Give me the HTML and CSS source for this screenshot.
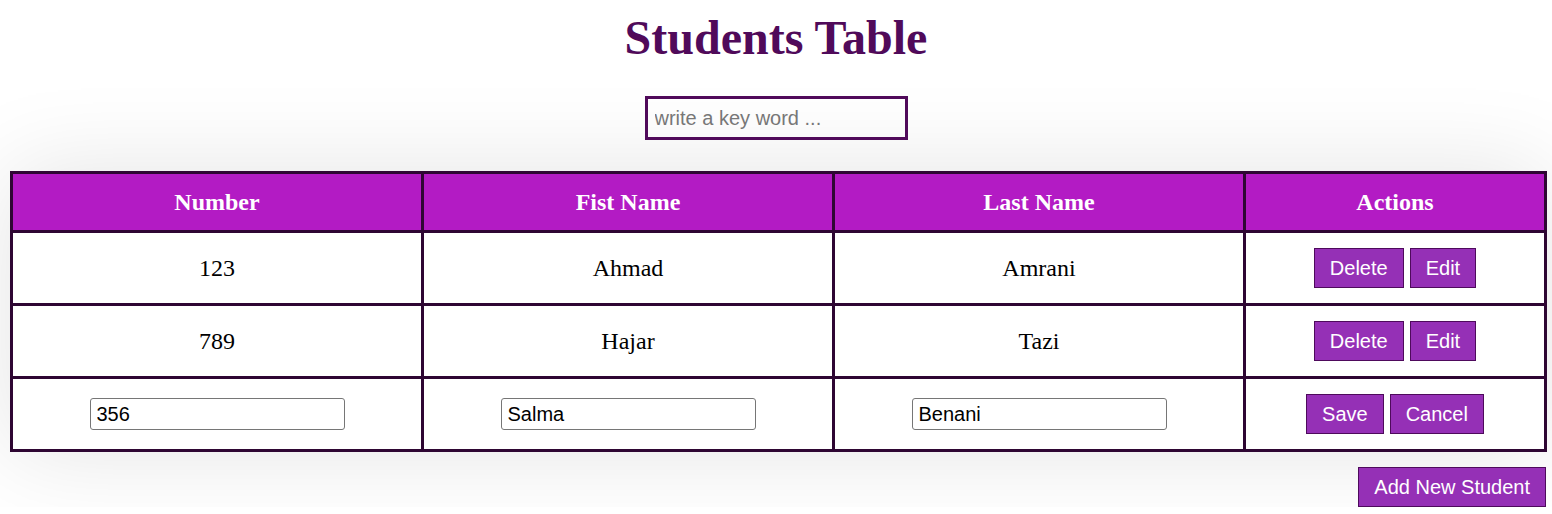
FILE: index.html
```html
<!DOCTYPE html>
<html lang="en">
<head>
<meta charset="utf-8">
<title>Students Table</title>
<link rel="stylesheet" href="styles.css">
</head>
<body>
  <h1 class="title">Students Table</h1>
  <div class="search-wrap">
    <input class="search" type="text" placeholder="write a key word ...">
  </div>
  <table class="students">
    <thead>
      <tr>
        <th class="col-wide">Number</th>
        <th class="col-wide">Fist Name</th>
        <th class="col-wide">Last Name</th>
        <th>Actions</th>
      </tr>
    </thead>
    <tbody>
      <tr>
        <td>123</td>
        <td>Ahmad</td>
        <td>Amrani</td>
        <td><div class="actions"><button class="btn">Delete</button><button class="btn">Edit</button></div></td>
      </tr>
      <tr>
        <td>789</td>
        <td>Hajar</td>
        <td>Tazi</td>
        <td><div class="actions"><button class="btn">Delete</button><button class="btn">Edit</button></div></td>
      </tr>
      <tr>
        <td><input class="cell-input" type="text" value="356"></td>
        <td><input class="cell-input" type="text" value="Salma"></td>
        <td><input class="cell-input" type="text" value="Benani"></td>
        <td><div class="actions"><button class="btn">Save</button><button class="btn">Cancel</button></div></td>
      </tr>
    </tbody>
  </table>
  <div class="footer">
    <button class="btn">Add New Student</button>
  </div>
</body>
</html>
```

FILE: styles.css
```css
html, body {
  margin: 0;
  padding: 0;
  background: #ffffff;
}

body {
  font-family: "Liberation Serif", "Times New Roman", serif;
  overflow: hidden;
}

.title {
  margin: 11px 0 0;
  text-align: center;
  font-size: 48px;
  font-weight: bold;
  color: #500a5a;
  line-height: 53px;
}

.search-wrap {
  display: flex;
  justify-content: center;
  margin-top: 32px;
}

.search {
  box-sizing: border-box;
  width: 263px;
  height: 44px;
  border: 3px solid #500a5a;
  padding: 0 7px;
  font-family: "Liberation Sans", Arial, sans-serif;
  font-size: 20px;
  color: #222;
  outline: none;
  background: transparent;
}

.search::placeholder {
  color: #777;
}

.students {
  margin: 31px 0 0 10px;
  width: 1537px;
  border-collapse: collapse;
  border: 3px solid #2e0633;
  background: #fff;
  box-shadow: 0 0 90px rgba(0, 0, 0, 0.11);
  table-layout: fixed;
  font-size: 24px;
}

.students th,
.students td {
  border: 3px solid #2e0633;
  text-align: center;
  vertical-align: middle;
}

.students th {
  background: #b31bc4;
  color: #fff;
  font-weight: bold;
  height: 56px;
  padding: 0;
}

.students td {
  height: 70px;
  padding: 0;
  color: #000;
}

.col-wide {
  width: 408px;
}

.actions {
  display: flex;
  justify-content: center;
  gap: 6px;
}

.btn {
  box-sizing: border-box;
  height: 40px;
  padding: 0 15px;
  background: #9530b6;
  color: #fff;
  border: 1px solid #4e0a5c;
  font-family: "Liberation Sans", Arial, sans-serif;
  font-size: 20px;
  line-height: 24px;
  cursor: pointer;
}

.cell-input {
  box-sizing: border-box;
  width: 255px;
  height: 32px;
  padding: 0 6px;
  border: 1px solid #767676;
  border-radius: 3px;
  font-family: "Liberation Sans", Arial, sans-serif;
  font-size: 20px;
  color: #000;
  background: #fff;
}

.footer {
  display: flex;
  justify-content: flex-end;
  margin: 15px 6px 0 0;
}
```
